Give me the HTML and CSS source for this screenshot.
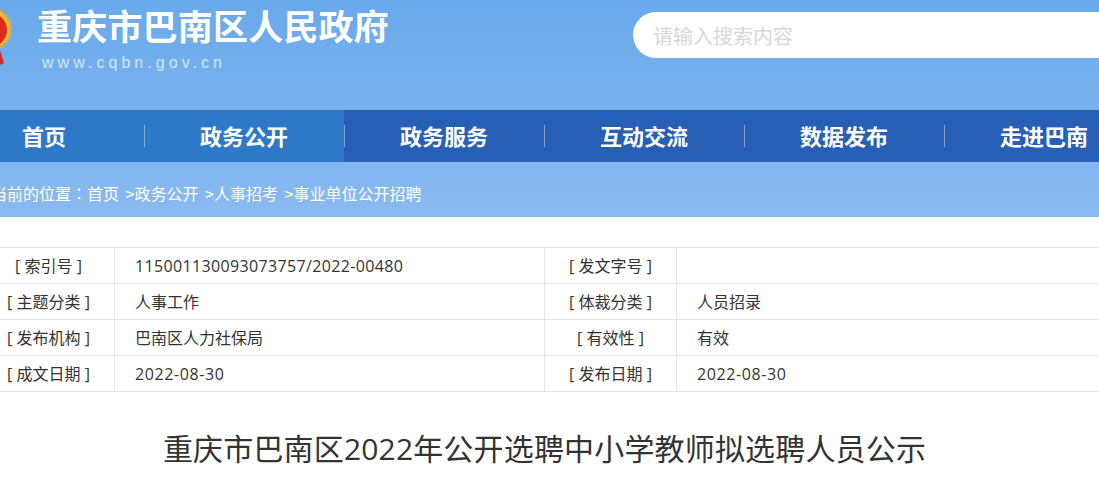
FILE: index.html
```html
<!DOCTYPE html>
<html lang="zh-CN">
<head>
<meta charset="utf-8">
<title>重庆市巴南区人民政府</title>
<link rel="stylesheet" href="styles.css">
</head>
<body>
<div class="top">
  <header class="header">
    <svg class="emblem" width="40" height="70" viewBox="0 0 40 70" aria-hidden="true">
      <path d="M27 47 L32 63 L28.500 65 L24 50Z" fill="#d8281c"/>
      <circle cx="18" cy="29" r="21" fill="#efb83c"/>
      <circle cx="18" cy="29" r="21" fill="none" stroke="#e2a52f" stroke-width="3" stroke-dasharray="2 2"/>
      <circle cx="18" cy="30" r="17" fill="#dd2a1c"/>
    </svg>
    <div class="brand">
      <div class="brand-name">重庆市巴南区人民政府</div>
      <div class="brand-url">www.cqbn.gov.cn</div>
    </div>
    <div class="search"><span class="search-hint">请输入搜索内容</span></div>
  </header>
  <nav class="nav">
    <a class="nav-item active">首页</a>
    <a class="nav-item active">政务公开</a>
    <a class="nav-item">政务服务</a>
    <a class="nav-item">互动交流</a>
    <a class="nav-item">数据发布</a>
    <a class="nav-item">走进巴南</a>
  </nav>
  <div class="crumbs"><span>当前的位置<span class="colon" lang="zh-TW">：</span>首页 &gt;政务公开 &gt;人事招考 &gt;事业单位公开招聘</span></div>
</div>
<main class="main">
  <div class="meta">
    <div class="cell label">[ 索引号 ]</div><div class="cell value num-long">115001130093073757/2022-00480</div><div class="cell label">[ 发文字号 ]</div><div class="cell value"></div>
    <div class="cell label">[ 主题分类 ]</div><div class="cell value">人事工作</div><div class="cell label">[ 体裁分类 ]</div><div class="cell value">人员招录</div>
    <div class="cell label">[ 发布机构 ]</div><div class="cell value">巴南区人力社保局</div><div class="cell label">[ 有效性 ]</div><div class="cell value">有效</div>
    <div class="cell label">[ 成文日期 ]</div><div class="cell value num-date">2022-08-30</div><div class="cell label">[ 发布日期 ]</div><div class="cell value num-date">2022-08-30</div>
  </div>
  <h1 class="title">重庆市巴南区2022年公开选聘中小学教师拟选聘人员公示</h1>
</main>
</body>
</html>
```
FILE: styles.css
```css
* { box-sizing: border-box; }
html, body { margin: 0; padding: 0; }
body {
  width: 1099px;
  height: 479px;
  overflow: hidden;
  background: #fff;
  font-family: "Open Sans", "Noto Sans CJK SC", sans-serif;
  color: #333;
}
.top { background: linear-gradient(#69a9eb, #8abaf0); height: 217px; }
.header { height: 110px; display: flex; align-items: flex-start; }
.emblem { flex: none; margin-left: -28px; }
.brand { width: 596px; margin-left: 25px; }
.brand-name {
  font-family: "Noto Sans CJK SC", sans-serif;
  font-size: 35px;
  line-height: 50px;
  font-weight: 700;
  letter-spacing: 0.2px;
  color: #fff;
  white-space: nowrap;
}
.brand-url {
  margin: 3px 0 0 5px;
  font-family: "Liberation Sans", sans-serif;
  font-size: 16px;
  line-height: 20px;
  letter-spacing: 4.05px;
  color: #d5e6f9;
}
.search {
  flex: 1;
  height: 46px;
  margin-top: 12px;
  padding-left: 20px;
  background: #fff;
  border-radius: 23px 0 0 23px;
  display: flex;
  align-items: center;
}
.search-hint { font-family: "Noto Sans CJK SC", sans-serif; font-size: 20px; color: #d8d8d8; }
.nav {
  height: 52px;
  display: flex;
  margin-left: -56px;
  background: #275fb6;
}
.nav-item {
  flex: none;
  width: 200px;
  height: 52px;
  padding-bottom: 2px;
  position: relative;
  display: flex;
  align-items: center;
  justify-content: center;
  font-family: "Noto Sans CJK SC", sans-serif;
  font-size: 22px;
  font-weight: 700;
  color: #fff;
}
.nav-item.active { background: #2e79c7; }
.nav-item::after {
  content: "";
  position: absolute;
  z-index: 1;
  right: -1px;
  top: 15px;
  height: 22px;
  width: 1px;
  background: rgba(255, 255, 255, 0.4);
}
.crumbs {
  height: 55px;
  margin-left: -9px;
  padding-top: 6px;
  display: flex;
  align-items: center;
  font-family: "Noto Sans CJK SC", sans-serif;
  font-size: 16px;
  word-spacing: 3px;
  color: #fff;
  white-space: pre;
}
.colon { font-family: "Noto Sans CJK TC", sans-serif; }
.main { padding-top: 30px; }
.meta {
  width: 1300px;
  margin-left: -17px;
  display: grid;
  grid-template-columns: 132px 430px 132px 606px;
  grid-auto-rows: 36px;
  border-top: 1px solid #e5e5e5;
}
.cell {
  display: flex;
  align-items: center;
  padding-top: 1px;
  border-bottom: 1px solid #e5e5e5;
  border-right: 1px solid #e5e5e5;
  font-size: 16px;
  line-height: 20px;
  color: #333;
}
.label { justify-content: center; }
.value { padding-left: 20px; }
.num-long { letter-spacing: 0.35px; }
.num-date { letter-spacing: 0.6px; }
.title {
  margin: 35px 0 0;
  padding-right: 10px;
  font-size: 30px;
  line-height: 44px;
  font-weight: 400;
  letter-spacing: 0.17px;
  text-align: center;
  color: #333;
  white-space: nowrap;
}
```
